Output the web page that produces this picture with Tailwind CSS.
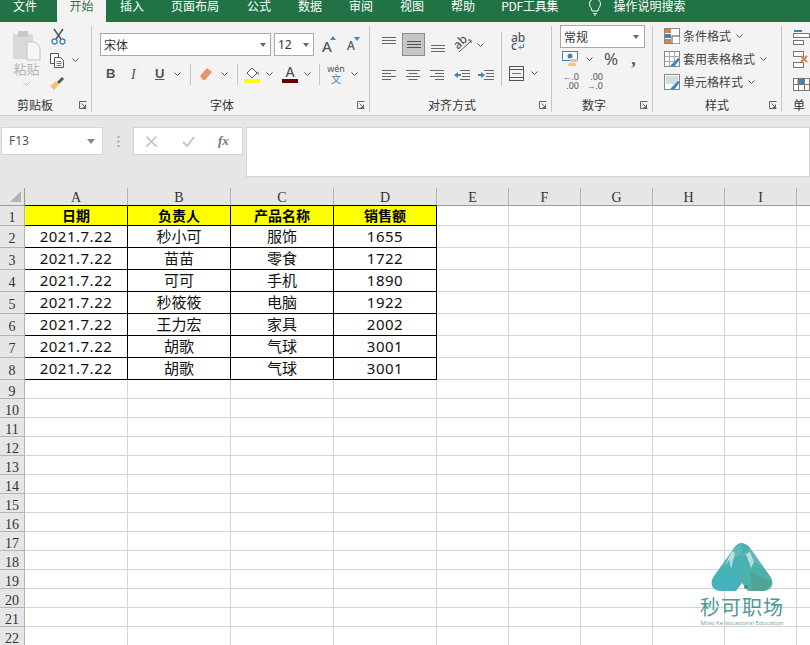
<!DOCTYPE html>
<html lang="zh-CN">
<head>
<meta charset="UTF-8">
<title>Excel</title>
<script src="https://cdn.jsdelivr.net/npm/@tailwindcss/browser@4"></script>
</head>
<body class="w-[810px] h-[645px] overflow-hidden bg-white relative font-['Noto_Sans_CJK_SC','Noto_Sans',sans-serif] text-[#444]">

  <!-- Tabs -->
  <div class="h-[22px] bg-[#217346] flex gap-[1px] text-white text-[12px] leading-[11px] whitespace-nowrap overflow-hidden">
    <div class="px-[13px] mr-[6px]">文件</div>
    <div class="w-[49px] h-[22px] bg-[#f3f3f3] text-[#217346] text-center">开始</div>
    <div class="px-[13px]">插入</div>
    <div class="px-[13px]">页面布局</div>
    <div class="px-[13px] ml-[1px]">公式</div>
    <div class="px-[13px]">数据</div>
    <div class="px-[13px]">审阅</div>
    <div class="px-[13px]">视图</div>
    <div class="px-[13px]">帮助</div>
    <div class="pl-[12px] pr-[11px] tracking-[-0.2px]">PDF工具集</div>
    <svg class="ml-[17px] mt-[-1px]" width="16" height="17" viewBox="0 0 16 17" fill="none" stroke="#fff"><path d="M5 12c0-3-2.500-4-2.500-7a5.500 5.500 0 0 1 11 0c0 3-2.500 4-2.500 7z"/><path d="M6 14.500h4M7 16h2"/></svg>
    <div class="ml-[9px]">操作说明搜索</div>
  </div>

  <!-- Ribbon -->
  <div class="h-[94px] bg-[#f3f3f3] border-b border-[#d2d2d2] flex text-[12px]">

    <!-- Clipboard -->
    <div class="w-[92px] h-[86px] border-r border-[#c6c6c6] flex flex-col mt-[4px] shrink-0">
      <div class="flex">
        <div class="w-[45px] flex flex-col items-center pl-[8px] pt-[4px]">
          <svg width="30" height="31" viewBox="0 0 30 31"><rect x="1" y="4" width="20" height="25" rx="1" fill="#d9d9d9"/><rect x="6" y="1" width="10" height="6" fill="#c8c8c8"/><path d="M15 12h8l5 5v13H15z" fill="#f6f6f6" stroke="#c4c4c4"/></svg>
          <div class="text-[#b5b5b5] text-[13px] leading-[16px]">粘贴</div>
          <svg class="mt-[5px]" width="7" height="4" viewBox="0 0 7 4" fill="none" stroke="#bbb"><path d="M.5.5l3 3 3-3"/></svg>
        </div>
        <div class="flex flex-col pt-[2px] pl-[4px] gap-[7px]">
          <svg class="ml-[2px]" width="15" height="17" viewBox="0 0 15 17" fill="none"><path d="M3 1l7 10M12 1L5 11" stroke="#555" stroke-width="1.500"/><circle cx="3.500" cy="13.500" r="2.500" stroke="#3b86bd" stroke-width="1.300"/><circle cx="11.500" cy="13.500" r="2.500" stroke="#3b86bd" stroke-width="1.300"/></svg>
          <div class="flex items-center">
            <svg width="16" height="16" viewBox="0 0 16 16" fill="#fff" stroke="#555"><path d="M1.500 1.500h8v10h-8z"/><path d="M5.500 5.500h6l3 3v7h-9z"/><path d="M7.500 9.500h5M7.500 11.500h5M7.500 13.500h5" stroke="#3b86bd"/></svg>
            <svg class="ml-[7px]" width="7" height="4" viewBox="0 0 7 4" fill="none" stroke="#555"><path d="M.5.500l3 3 3-3"/></svg>
          </div>
          <svg class="mt-[1px]" width="16" height="15" viewBox="0 0 16 15"><path d="M8 6l5-5 2 2-5 5z" fill="#555"/><path d="M1 10l6-5 3 4-5 5z" fill="#f6c078"/></svg>
        </div>
      </div>
      <div class="flex justify-between items-center pl-[17px] pr-[4px] mt-auto leading-[14px]">
        <span class="text-[#333]">剪贴板</span>
        <svg width="8" height="8" viewBox="0 0 8 8" fill="none" stroke="#666"><path d="M.5 7.500v-7h7M2.500 2.500l4 4M6.500 3.500v3h-3M7.500 7.500h-7"/></svg>
      </div>
    </div>

    <!-- Font -->
    <div class="w-[278px] h-[86px] border-r border-[#c6c6c6] mt-[4px] shrink-0 pl-[8px] flex flex-col">
      <div class="flex items-center mt-[7px] h-[23px]">
        <div class="w-[171px] h-[23px] bg-white border border-[#a9a9a9] flex items-center justify-between pl-[3px] pr-[4px] text-[12px] text-[#333]">宋体<span class="w-0 h-0 border-x-[3.500px] border-x-transparent border-t-[4px] border-t-[#666]"></span></div>
        <div class="w-[40px] ml-[3px] h-[23px] bg-white border border-[#a9a9a9] flex items-center justify-between pl-[3px] pr-[4px] font-['Noto_Sans'] text-[#333]">12<span class="w-0 h-0 border-x-[3.500px] border-x-transparent border-t-[4px] border-t-[#666]"></span></div>
        <div class="ml-[8px] w-[14px] relative font-['Noto_Sans'] text-[15px] leading-[18px] mt-[2px] font-medium text-[#555]">A<span class="absolute left-[8px] top-[-1px] w-0 h-0 border-x-[3.500px] border-x-transparent border-b-[4px] border-b-[#3b86bd]"></span></div>
        <div class="ml-[11px] w-[14px] relative font-['Noto_Sans'] text-[12px] leading-[16px] mt-[3px] font-medium text-[#555]">A<span class="absolute left-[7px] top-[-1px] w-0 h-0 border-x-[3.500px] border-x-transparent border-t-[4px] border-t-[#3b86bd]"></span></div>
      </div>
      <div class="flex items-center h-[22px] mt-[7px] text-[#555]">
        <span class="ml-[6px] w-[10px] font-['Liberation_Sans'] font-bold text-[13px]">B</span>
        <span class="ml-[15px] w-[9px] font-['Liberation_Serif'] italic text-[14px]">I</span>
        <span class="ml-[15px] w-[10px] font-['Liberation_Sans'] font-bold text-[13px] underline">U</span>
        <svg class="ml-[9px]" width="7" height="4" viewBox="0 0 7 4" fill="none" stroke="#555"><path d="M.5.500l3 3 3-3"/></svg>
        <div class="ml-[9px] w-px h-[21px] bg-[#c6c6c6]"></div>
        <svg class="ml-[8px]" width="14" height="14" viewBox="0 0 14 14"><path d="M1 9l7-8 5 4-7 8H4z" fill="#e8906f"/></svg>
        <svg class="ml-[8px]" width="7" height="4" viewBox="0 0 7 4" fill="none" stroke="#555"><path d="M.5.500l3 3 3-3"/></svg>
        <div class="ml-[9px] w-px h-[21px] bg-[#c6c6c6]"></div>
        <div class="ml-[6px] flex flex-col items-center w-[16px]">
          <svg width="15" height="13" viewBox="0 0 15 13" fill="none"><path d="M2 7l5-5 5 5-5 5z" stroke="#555" fill="#fff"/><path d="M12 5l2 2-1 3z" fill="#3b86bd"/></svg>
          <div class="w-[16px] h-[4px] bg-[#ffff00]"></div>
        </div>
        <svg class="ml-[6px]" width="7" height="4" viewBox="0 0 7 4" fill="none" stroke="#555"><path d="M.5.500l3 3 3-3"/></svg>
        <div class="ml-[9px] flex flex-col items-center w-[16px]">
          <span class="font-['Noto_Sans'] text-[14px] leading-[14px] font-medium">A</span>
          <div class="w-[16px] h-[4px] bg-[#6b0000]"></div>
        </div>
        <svg class="ml-[6px]" width="7" height="4" viewBox="0 0 7 4" fill="none" stroke="#555"><path d="M.5.500l3 3 3-3"/></svg>
        <div class="ml-[8px] w-px h-[21px] bg-[#c6c6c6]"></div>
        <div class="ml-[7px] w-[18px] flex flex-col items-center text-center">
          <span class="font-['Noto_Sans'] text-[9px] leading-[9px]">wén</span>
          <span class="text-[#3b86bd] text-[10px] leading-[11px]">文</span>
        </div>
        <svg class="ml-[6px]" width="7" height="4" viewBox="0 0 7 4" fill="none" stroke="#555"><path d="M.5.500l3 3 3-3"/></svg>
      </div>
      <div class="flex justify-between items-center pl-[110px] pr-[4px] mt-auto leading-[14px]">
        <span class="text-[#333]">字体</span>
        <svg width="8" height="8" viewBox="0 0 8 8" fill="none" stroke="#666"><path d="M.5 7.500v-7h7M2.500 2.500l4 4M6.500 3.500v3h-3M7.500 7.500h-7"/></svg>
      </div>
    </div>

    <!-- Alignment -->
    <div class="w-[182px] h-[86px] border-r border-[#c6c6c6] mt-[4px] shrink-0 flex flex-col">
      <div class="flex">
        <div class="pl-[12px] pt-[7px] flex flex-col">
          <div class="flex items-center h-[23px]">
            <svg class="mb-[8px]" width="14" height="8" viewBox="0 0 14 8" stroke="#666"><path d="M0 .5h14M0 3.500h14M0 6.500h14"/></svg>
            <div class="ml-[6px] w-[23px] h-[23px] bg-[#c6c6c6] border border-[#8c8c8c] flex items-center justify-center"><svg width="14" height="8" viewBox="0 0 14 8" stroke="#555"><path d="M0 .5h14M0 3.500h14M0 6.500h14"/></svg></div>
            <svg class="ml-[6px] mt-[8px]" width="14" height="8" viewBox="0 0 14 8" stroke="#666"><path d="M0 .5h14M0 3.500h14M0 6.500h14"/></svg>
            <div class="ml-[9px] w-[17px] h-[16px] relative font-['Noto_Sans'] font-medium text-[12px] leading-[12px] text-[#555]">
              <span class="absolute left-[-1px] top-[-1px] -rotate-45">ab</span>
              <svg class="absolute left-[3px] top-[1px]" width="15" height="15" viewBox="0 0 15 15" fill="none" stroke="#555"><path d="M2 14L14 3M11 2h3v3"/></svg>
            </div>
            <svg class="ml-[6px]" width="7" height="4" viewBox="0 0 7 4" fill="none" stroke="#555"><path d="M.5.500l3 3 3-3"/></svg>
          </div>
          <div class="flex items-center h-[22px] mt-[8px]">
            <svg width="14" height="11" viewBox="0 0 14 11" stroke="#666"><path d="M0 .5h14M0 3.500h9M0 6.500h14M0 9.500h9"/></svg>
            <svg class="ml-[10px]" width="14" height="11" viewBox="0 0 14 11" stroke="#666"><path d="M0 .5h14M2.500 3.500h9M0 6.500h14M2.500 9.500h9"/></svg>
            <svg class="ml-[10px]" width="14" height="11" viewBox="0 0 14 11" stroke="#666"><path d="M0 .5h14M5 3.500h9M0 6.500h14M5 9.500h9"/></svg>
            <svg class="ml-[10px]" width="16" height="11" viewBox="0 0 16 11"><path d="M6 .5h10M8 3.500h8M8 6.500h8M6 9.500h10" stroke="#666"/><path d="M0 5l4-3v2h3v2H4v2z" fill="#3b86bd"/></svg>
            <svg class="ml-[8px]" width="16" height="11" viewBox="0 0 16 11"><path d="M6 .5h10M8 3.500h8M8 6.500h8M6 9.500h10" stroke="#666"/><path d="M7 5L3 2v2H0v2h3v2z" fill="#3b86bd"/></svg>
          </div>
        </div>
        <div class="ml-[7px] mt-[6px] w-px h-[54px] bg-[#c6c6c6]"></div>
        <div class="ml-[9px] pt-[7px] flex flex-col">
          <div class="h-[23px] w-[14px] relative text-[#555] text-[12px] leading-[8px] font-medium font-['Noto_Sans'] pt-[1px]">ab<br>c<svg class="absolute left-[7px] top-[11px]" width="6" height="6" viewBox="0 0 6 6" fill="none" stroke="#3b86bd"><path d="M5.500 0v3.500H1M3 1.500l-2 2 2 2"/></svg></div>
          <div class="flex items-center h-[22px] mt-[6px] ml-[-2px]">
            <svg width="15" height="15" viewBox="0 0 15 15" fill="none"><rect x=".5" y=".5" width="14" height="14" stroke="#555"/><path d="M.5 3.500h14M.5 11.500h14" stroke="#555"/><path d="M3 7.500h9" stroke="#3b86bd"/></svg>
            <svg class="ml-[7px]" width="7" height="4" viewBox="0 0 7 4" fill="none" stroke="#555"><path d="M.5.500l3 3 3-3"/></svg>
          </div>
        </div>
      </div>
      <div class="flex justify-between items-center pl-[58px] pr-[4px] mt-auto leading-[14px]">
        <span class="text-[#333]">对齐方式</span>
        <svg width="8" height="8" viewBox="0 0 8 8" fill="none" stroke="#666"><path d="M.5 7.500v-7h7M2.500 2.500l4 4M6.500 3.500v3h-3M7.500 7.500h-7"/></svg>
      </div>
    </div>

    <!-- Number -->
    <div class="w-[101px] h-[86px] border-r border-[#c6c6c6] mt-[4px] shrink-0 pl-[8px] flex flex-col">
      <div class="w-[85px] h-[23px] mt-[-1px] bg-white border border-[#a9a9a9] flex items-center justify-between pl-[3px] pr-[5px] text-[#333]">常规<span class="w-0 h-0 border-x-[3.500px] border-x-transparent border-t-[4px] border-t-[#666]"></span></div>
      <div class="flex items-center h-[20px] mt-[1px] text-[#555]">
        <svg class="ml-[2px]" width="17" height="16" viewBox="0 0 17 16"><rect x=".5" y=".5" width="15" height="9" fill="#fff" stroke="#3b86bd"/><circle cx="8" cy="5" r="2.500" fill="#3b86bd"/><rect x="8" y="8" width="8" height="3" rx="1.500" fill="#f6c078"/><rect x="6" y="12" width="8" height="3" rx="1.500" fill="#f6c078"/></svg>
        <svg class="ml-[7px]" width="7" height="4" viewBox="0 0 7 4" fill="none" stroke="#555"><path d="M.5.500l3 3 3-3"/></svg>
        <span class="ml-[11px] text-[17px] leading-[18px] font-['Noto_Sans']">%</span>
        <span class="ml-[13px] text-[18px] leading-[18px] font-bold font-['Liberation_Serif']">,</span>
      </div>
      <div class="flex h-[18px] mt-[3px] text-[#555] font-['Noto_Sans'] text-[9px] leading-[9px]">
        <div class="ml-[1px] w-[18px] text-right"><span class="text-[#3b86bd]">←</span>.0<br>.00</div>
        <div class="ml-[6px] w-[18px] text-right">.00<br><span class="text-[#3b86bd]">→</span>.0</div>
      </div>
      <div class="flex justify-between items-center pl-[22px] pr-[4px] mt-auto leading-[14px]">
        <span class="text-[#333]">数字</span>
        <svg width="8" height="8" viewBox="0 0 8 8" fill="none" stroke="#666"><path d="M.5 7.500v-7h7M2.500 2.500l4 4M6.500 3.500v3h-3M7.500 7.500h-7"/></svg>
      </div>
    </div>

    <!-- Styles -->
    <div class="w-[129px] h-[86px] border-r border-[#c6c6c6] mt-[4px] shrink-0 pl-[11px] flex flex-col text-[#444]">
      <div class="flex items-center h-[20px]">
        <svg width="16" height="16" viewBox="0 0 16 16"><rect x=".5" y=".5" width="15" height="15" fill="#fff" stroke="#888"/><rect x="1" y="1" width="6" height="4" fill="#d9843d"/><rect x="1" y="6" width="6" height="4" fill="#3b86bd"/><rect x="1" y="11" width="6" height="4" fill="#d9843d"/><rect x="8" y="8" width="8" height="8" fill="#fff" stroke="#555"/></svg>
        <span class="ml-[3px]">条件格式</span>
        <svg class="ml-[5px]" width="7" height="4" viewBox="0 0 7 4" fill="none" stroke="#555"><path d="M.5.500l3 3 3-3"/></svg>
      </div>
      <div class="flex items-center h-[20px] mt-[3px]">
        <svg width="16" height="16" viewBox="0 0 16 16"><rect x=".5" y=".5" width="15" height="15" fill="#fff" stroke="#888"/><path d="M.5 5.500h15M.5 10.500h15M5.500.5v15M10.500.5v15" stroke="#aaa"/><path d="M6 15l8-8 2 1-6 8z" fill="#3b86bd"/></svg>
        <span class="ml-[3px]">套用表格格式</span>
        <svg class="ml-[5px]" width="7" height="4" viewBox="0 0 7 4" fill="none" stroke="#555"><path d="M.5.500l3 3 3-3"/></svg>
      </div>
      <div class="flex items-center h-[20px] mt-[3px]">
        <svg width="16" height="16" viewBox="0 0 16 16"><rect x=".5" y=".5" width="15" height="15" fill="#fff" stroke="#888"/><rect x="2" y="2" width="12" height="8" fill="#cfe0dc"/><path d="M6 15l8-8 2 1-6 8z" fill="#3b86bd"/></svg>
        <span class="ml-[3px]">单元格样式</span>
        <svg class="ml-[5px]" width="7" height="4" viewBox="0 0 7 4" fill="none" stroke="#555"><path d="M.5.500l3 3 3-3"/></svg>
      </div>
      <div class="flex justify-between items-center pl-[41px] pr-[4px] mt-auto leading-[14px]">
        <span class="text-[#333]">样式</span>
        <svg width="8" height="8" viewBox="0 0 8 8" fill="none" stroke="#666"><path d="M.5 7.500v-7h7M2.500 2.500l4 4M6.500 3.500v3h-3M7.500 7.500h-7"/></svg>
      </div>
    </div>

    <!-- Cells, cut off by the window -->
    <div class="pl-[11px] mt-[4px] h-[86px] flex flex-col overflow-hidden">
      <div class="flex flex-col gap-[6px] mt-[2px]">
        <svg width="17" height="17" viewBox="0 0 17 17" fill="#fff" stroke="#777"><rect x=".5" y="5.500" width="16" height="4"/><rect x=".5" y="12.500" width="10" height="4"/><path d="M1 3h8" stroke="#3b86bd" stroke-width="2"/></svg>
        <svg width="17" height="17" viewBox="0 0 17 17" fill="#fff" stroke="#777"><rect x=".5" y=".5" width="10" height="5"/><rect x=".5" y="11.500" width="10" height="5"/><path d="M8 5l6 6M14 5l-6 6" stroke="#d9843d" stroke-width="2"/></svg>
        <svg width="17" height="17" viewBox="0 0 17 17" fill="#fff" stroke="#777"><rect x=".5" y="4.500" width="16" height="12"/><rect x="5" y="5" width="6" height="5" fill="#3b86bd"/><path d="M.5 10.500h16M5.500 4.500v12M11.500 4.500v12"/></svg>
      </div>
      <span class="text-[#333] leading-[14px] mt-auto">单</span>
    </div>
  </div>

  <!-- Formula bar -->
  <div class="h-[72px] bg-[#e6e6e6] flex items-start pt-[11px] text-[12px]">
    <div class="ml-[1px] w-[102px] h-[28px] bg-white border border-[#d4d4d4] flex items-center justify-between pl-[7px] pr-[7px] font-['Noto_Sans'] text-[#555]">F13<span class="w-0 h-0 border-x-[4px] border-x-transparent border-t-[5px] border-t-[#888]"></span></div>
    <div class="w-[30px] h-[28px] flex items-center justify-center"><svg width="3" height="11" viewBox="0 0 3 11" fill="#aaa"><rect x=".5" width="2" height="2"/><rect x=".5" y="4.500" width="2" height="2"/><rect x=".5" y="9" width="2" height="2"/></svg></div>
    <div class="w-[110px] h-[28px] bg-white border border-[#d4d4d4] flex items-center text-[#bbb]">
      <svg class="ml-[12px]" width="11" height="11" viewBox="0 0 11 11" fill="none" stroke="#c4c4c4" stroke-width="1.600"><path d="M.5.5l10 10M10.500.5l-10 10"/></svg>
      <svg class="ml-[25px]" width="13" height="11" viewBox="0 0 13 11" fill="none" stroke="#c4c4c4" stroke-width="2"><path d="M1 6l4 4 7-9"/></svg>
      <span class="ml-[23px] font-['Liberation_Serif'] italic font-bold text-[13px] text-[#777]">fx</span>
    </div>
    <div class="ml-[3px] flex-1 h-[50px] bg-white border border-[#d4d4d4]"></div>
  </div>

  <!-- Sheet -->
  <div id="sheet" class="font-['Noto_Sans_CJK_SC','Noto_Sans',sans-serif]"></div>

  <!-- Watermark -->
  <div class="absolute left-[699px] top-[542px] w-[86px] flex flex-col items-center pointer-events-none">
    <svg width="64" height="50" viewBox="0 0 64 50">
      <defs><linearGradient id="mt" x1="0" y1="0" x2="1" y2="1"><stop offset="0" stop-color="#3fb0c6"/><stop offset="1" stop-color="#55b09c"/></linearGradient></defs>
      <path d="M32 1c-4 0-6 2-8 5L4 34c-5 7-2 15 7 15h15l6-8 6 8h15c9 0 12-8 7-15L40 6c-2-3-4-4-8-5z" fill="url(#mt)"/>
      <path d="M32 1l-8 5-8 14 16-8zM40 6l14 20-22-14z" fill="#6fbcb8" opacity=".6"/>
      <path d="M22 9l-8 16 5-7 2 9 4-16zM36 12l5 14 3-6-4-10z" fill="#d6ecea" opacity=".75"/>
      <path d="M6 36l14-4 10 6-6 11H11c-5 0-7-5-5-13z" fill="#45b4c4" opacity=".7"/>
      <path d="M40 30l22 10-7 9H42z" fill="#4f9f8b" opacity=".6"/>
      <circle cx="36" cy="45" r="2" fill="#3f8f85"/>
    </svg>
    <div class="text-[#4c9b92] text-[20px] leading-[24px] tracking-[1px] whitespace-nowrap mt-[3px]">秒可职场</div>
    <div class="text-[#6fb0a8] text-[6px] leading-[8px] whitespace-nowrap font-['Noto_Sans']">Miao Ke Vocational Education</div>
  </div>

  <script>
    var rows = [
      ['日期', '负责人', '产品名称', '销售额'],
      ['2021.7.22', '秒小可', '服饰', '1655'],
      ['2021.7.22', '苗苗', '零食', '1722'],
      ['2021.7.22', '可可', '手机', '1890'],
      ['2021.7.22', '秒筱筱', '电脑', '1922'],
      ['2021.7.22', '王力宏', '家具', '2002'],
      ['2021.7.22', '胡歌', '气球', '3001'],
      ['2021.7.22', '胡歌', '气球', '3001']
    ];
    var cols = ['A', 'B', 'C', 'D', 'E', 'F', 'G', 'H', 'I', 'J'];
    var widths = [103, 103, 103, 103, 72, 72, 72, 72, 72, 72];

    var html = '<div class="flex h-[18px] bg-[#e6e6e6]">' +
      '<div class="w-[25px] shrink-0 border-r border-b border-[#9c9c9c] flex items-end justify-end pr-[3px] pb-[3px]"><svg width="11" height="11" viewBox="0 0 11 11"><path d="M11 0v11H0z" fill="#b4b4b4"/></svg></div>';
    cols.forEach(function (c, i) {
      var line = i < 4 ? 'border-b-black' : 'border-b-[#9c9c9c]';
      html += '<div class="shrink-0 border-r border-b border-r-[#b4b4b4] ' + line + ' text-center font-[\'Liberation_Serif\'] text-[14px] leading-[19px] text-[#333]" style="width:' + widths[i] + 'px">' + c + '</div>';
    });
    html += '</div>';

    for (var r = 0; r < 22; r++) {
      var h = r == 0 ? 20 : r < 8 ? 22 : 19;
      var lead = r == 0 ? 'leading-[24px]' : r < 8 ? 'leading-[26px]' : 'leading-[23px]';
      html += '<div class="flex" style="height:' + h + 'px">' +
        '<div class="w-[25px] shrink-0 bg-[#e6e6e6] border-r border-b border-[#b4b4b4] text-center font-[\'Liberation_Serif\'] text-[14px] overflow-hidden ' + lead + ' text-[#333]">' + (r + 1) + '</div>';
      cols.forEach(function (c, i) {
        var inTable = r < 8 && i < 4;
        var cls = 'border-r border-b border-[#d4d4d4]';
        if (inTable) cls = 'border-r border-b border-black text-center text-[15px] text-[#111] leading-[20px]';
        if (inTable && (i == 0 || i == 3)) cls = 'border-r border-b border-black text-center text-[15px] text-[#111] leading-[20px] font-[\'Noto_Sans\'] tracking-[0.5px]';
        if (inTable && r == 0) cls = 'border-r border-b border-black text-center text-[14px] font-bold text-black bg-[#ffff00] leading-[19px]';
        html += '<div class="shrink-0 ' + cls + '" style="width:' + widths[i] + 'px">' + (inTable ? rows[r][i] : '') + '</div>';
      });
      html += '</div>';
    }
    document.getElementById('sheet').innerHTML = html;
  </script>
</body>
</html>
